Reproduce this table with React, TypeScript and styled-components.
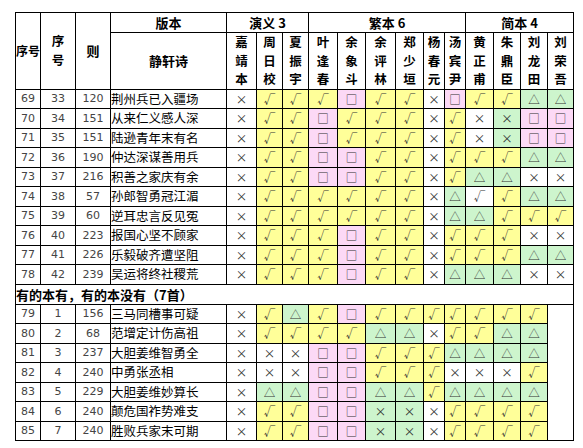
import styled, { createGlobalStyle } from "styled-components";
import { FC } from "react";

const GlobalStyle = createGlobalStyle`
  html, body {
    margin: 0;
    padding: 0;
    background: #fff;
  }
`;

type Mark = "v" | "s" | "t" | "x" | "g" | "w";

const MARKS: Record<Mark, { glyph: string; bg: string }> = {
  v: { glyph: "√", bg: "#ffff99" },
  s: { glyph: "□", bg: "#fcd9f6" },
  t: { glyph: "△", bg: "#cdf5cd" },
  x: { glyph: "×", bg: "#ffffff" },
  g: { glyph: "×", bg: "#cdf5cd" },
  w: { glyph: "√", bg: "#ffffff" },
};

const WIDTHS = [25, 35, 35, 116, 30, 26, 26, 29, 28, 30, 28, 21, 21, 28, 27, 27, 26];

const EDITIONS = [
  "嘉靖本",
  "周日校",
  "夏振宇",
  "叶逢春",
  "余象斗",
  "余评林",
  "郑少垣",
  "杨春元",
  "汤宾尹",
  "黄正甫",
  "朱鼎臣",
  "刘龙田",
  "刘荣吾",
];

interface Row {
  no: number;
  seq: number;
  ze: number;
  poem: string;
  marks: string;
}

const ALL_ROWS: Row[] = [
  { no: 69, seq: 33, ze: 120, poem: "荆州兵已入疆场", marks: "xvvvsvvxsvvtt" },
  { no: 70, seq: 34, ze: 151, poem: "从来仁义感人深", marks: "xvvsvvvxvxgss" },
  { no: 71, seq: 35, ze: 151, poem: "陆逊青年末有名", marks: "xvvsvvvxvxgss" },
  { no: 72, seq: 36, ze: 190, poem: "仲达深谋善用兵", marks: "xvvssvvxvvvtt" },
  { no: 73, seq: 37, ze: 216, poem: "积善之家庆有余", marks: "xvvssvvxvttxx" },
  { no: 74, seq: 38, ze: 57, poem: "孙郎智勇冠江湄", marks: "xvvvvvvxtwvtt" },
  { no: 75, seq: 39, ze: 60, poem: "逆耳忠言反见冤", marks: "xvvvvvvxttvvv" },
  { no: 76, seq: 40, ze: 223, poem: "报国心坚不顾家", marks: "xvvvsvvxvvvxx" },
  { no: 77, seq: 41, ze: 226, poem: "乐毅破齐遭坚阻", marks: "xvvvsvvxvvvtt" },
  { no: 78, seq: 42, ze: 239, poem: "吴运将终社稷荒", marks: "xvvvsvvxtttxx" },
];

const SOME_ROWS: Row[] = [
  { no: 79, seq: 1, ze: 156, poem: "三马同槽事可疑", marks: "xvtvsvvvvvvv" },
  { no: 80, seq: 2, ze: 68, poem: "范增定计伤高祖", marks: "xvvvvttxvvtt" },
  { no: 81, seq: 3, ze: 237, poem: "大胆姜维智勇全", marks: "xxxssvvvtttt" },
  { no: 82, seq: 4, ze: 240, poem: "中勇张丞相", marks: "xxxssvvvxxxv" },
  { no: 83, seq: 5, ze: 229, poem: "大胆姜维妙算长", marks: "xttssttvtttt" },
  { no: 84, seq: 6, ze: 240, poem: "颠危国祚势难支", marks: "xvvssggxvvvv" },
  { no: 85, seq: 7, ze: 240, poem: "胜败兵家末可期", marks: "xvvssggxvvvv" },
];

const DataRow: FC<{ row: Row; blank?: number }> = ({ row, blank }) => (
  <BodyRow>
    <NumCell>{row.no}</NumCell>
    <NumCell>{row.seq}</NumCell>
    <NumCell>{row.ze}</NumCell>
    <PoemCell>{row.poem}</PoemCell>
    {row.marks.split("").map((m, i) => (
      <MarkCell key={i} $bg={MARKS[m as Mark].bg}>
        {MARKS[m as Mark].glyph}
      </MarkCell>
    ))}
    {blank ? <BlankCell rowSpan={blank} /> : null}
  </BodyRow>
);

const App: FC = () => (
  <Page>
    <GlobalStyle />
    <Table>
      <colgroup>
        {WIDTHS.map((w, i) => (
          <col key={i} style={{ width: w }} />
        ))}
      </colgroup>
      <thead>
        <GroupRow>
          <HeadCell rowSpan={2} $size={12}>
            序号
          </HeadCell>
          <VerticalHead rowSpan={2}>
            <span>序</span>
            <span>号</span>
          </VerticalHead>
          <HeadCell rowSpan={2}>则</HeadCell>
          <HeadCell>版本</HeadCell>
          <HeadCell colSpan={3}>演义 3</HeadCell>
          <HeadCell colSpan={6}>繁本 6</HeadCell>
          <HeadCell colSpan={4}>简本 4</HeadCell>
        </GroupRow>
        <TitleRow>
          <HeadCell>静轩诗</HeadCell>
          {EDITIONS.map((name) => (
            <VerticalHead key={name}>
              {name.split("").map((c, i) => (
                <span key={i}>{c}</span>
              ))}
            </VerticalHead>
          ))}
        </TitleRow>
      </thead>
      <tbody>
        {ALL_ROWS.map((r) => (
          <DataRow key={r.no} row={r} />
        ))}
        <BodyRow>
          <SectionCell colSpan={17}>有的本有，有的本没有（7首）</SectionCell>
        </BodyRow>
        {SOME_ROWS.map((r, i) => (
          <DataRow key={r.no} row={r} blank={i === 0 ? SOME_ROWS.length : 0} />
        ))}
      </tbody>
    </Table>
  </Page>
);

export default App;

// styled components

const Page = styled.div`
  padding: 12px 0 0 15px;
  font-family: "Noto Sans CJK SC", "Liberation Sans", sans-serif;
  color: #000;
`;

const Table = styled.table`
  border-collapse: collapse;
  table-layout: fixed;
  width: 559px;
  border: 1px solid #000;

  td,
  th {
    border: 1px solid #000;
    padding: 0;
    overflow: hidden;
    white-space: nowrap;
  }
`;

const GroupRow = styled.tr`
  height: 20px;
`;

const TitleRow = styled.tr`
  height: 56px;
`;

const BodyRow = styled.tr`
  height: 19.5px;
`;

const HeadCell = styled.th<{ $size?: number }>`
  font-size: ${(p) => p.$size ?? 13}px;
  font-weight: 700;
  line-height: 18px;
  text-align: center;
  vertical-align: middle;
  background: #fff;
`;

const VerticalHead = styled.th`
  font-size: 12.5px;
  font-weight: 700;
  line-height: 18.5px;
  text-align: center;
  background: #fff;

  span {
    display: block;
    height: 18.5px;
  }
`;

const NumCell = styled.td`
  font-family: "DejaVu Sans", "Liberation Sans", sans-serif;
  font-size: 11px;
  color: #444;
  text-align: center;
  background: #fff;
`;

const PoemCell = styled.td`
  font-size: 12.5px;
  line-height: 16px;
  text-align: left;
  background: #fff;
`;

const MarkCell = styled.td<{ $bg: string }>`
  font-size: 11.5px;
  color: #333;
  text-align: center;
  background: ${(p) => p.$bg};
`;

const SectionCell = styled.td`
  font-size: 13px;
  font-weight: 700;
  text-align: left;
  background: #fff;
`;

const BlankCell = styled.td`
  background: #fff;
`;
